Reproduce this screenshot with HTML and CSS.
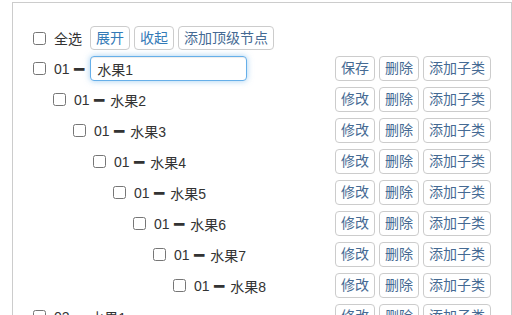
FILE: index.html
```html
<!DOCTYPE html>
<html lang="zh-CN">
<head>
    <meta charset="UTF-8">
    <meta name="viewport" content="width=device-width, initial-scale=1.0">
    <title>分类树</title>
    <link rel="stylesheet" href="styles.css">
</head>
<body>
    <div id="tree-panel">
        <div class="tree-row top-row">
            <label class="node-label"><input type="checkbox"> 全选</label>
            <div class="toolbar">
                <button class="btn btn-primary-text">展开</button>
                <button class="btn btn-primary-text">收起</button>
                <button class="btn">添加顶级节点</button>
            </div>
        </div>

        <div class="tree-row level-0">
            <div class="node-label">
                <input type="checkbox">
                <span class="code">01</span><span class="dash">━</span>
                <input type="text" class="name-input" value="水果1">
            </div>
            <div class="actions">
                <button class="btn">保存</button>
                <button class="btn">删除</button>
                <button class="btn">添加子类</button>
            </div>
        </div>

        <div class="tree-row level-1">
            <div class="node-label"><input type="checkbox"><span class="code">01</span><span class="dash">━</span><span class="name">水果2</span></div>
            <div class="actions"><button class="btn">修改</button><button class="btn">删除</button><button class="btn">添加子类</button></div>
        </div>
        <div class="tree-row level-2">
            <div class="node-label"><input type="checkbox"><span class="code">01</span><span class="dash">━</span><span class="name">水果3</span></div>
            <div class="actions"><button class="btn">修改</button><button class="btn">删除</button><button class="btn">添加子类</button></div>
        </div>
        <div class="tree-row level-3">
            <div class="node-label"><input type="checkbox"><span class="code">01</span><span class="dash">━</span><span class="name">水果4</span></div>
            <div class="actions"><button class="btn">修改</button><button class="btn">删除</button><button class="btn">添加子类</button></div>
        </div>
        <div class="tree-row level-4">
            <div class="node-label"><input type="checkbox"><span class="code">01</span><span class="dash">━</span><span class="name">水果5</span></div>
            <div class="actions"><button class="btn">修改</button><button class="btn">删除</button><button class="btn">添加子类</button></div>
        </div>
        <div class="tree-row level-5">
            <div class="node-label"><input type="checkbox"><span class="code">01</span><span class="dash">━</span><span class="name">水果6</span></div>
            <div class="actions"><button class="btn">修改</button><button class="btn">删除</button><button class="btn">添加子类</button></div>
        </div>
        <div class="tree-row level-6">
            <div class="node-label"><input type="checkbox"><span class="code">01</span><span class="dash">━</span><span class="name">水果7</span></div>
            <div class="actions"><button class="btn">修改</button><button class="btn">删除</button><button class="btn">添加子类</button></div>
        </div>
        <div class="tree-row level-7">
            <div class="node-label"><input type="checkbox"><span class="code">01</span><span class="dash">━</span><span class="name">水果8</span></div>
            <div class="actions"><button class="btn">修改</button><button class="btn">删除</button><button class="btn">添加子类</button></div>
        </div>

        <div class="tree-row level-0">
            <div class="node-label"><input type="checkbox"><span class="code">02</span><span class="dash">━</span><span class="name">水果1</span></div>
            <div class="actions"><button class="btn">修改</button><button class="btn">删除</button><button class="btn">添加子类</button></div>
        </div>
    </div>
</body>
</html>
```

FILE: styles.css
```css
* {
    margin: 0;
    padding: 0;
    box-sizing: border-box;
}

body {
    font-family: "Liberation Sans", "Noto Sans CJK SC", sans-serif;
    font-size: 14px;
    color: #333;
    background-color: #fff;
    overflow: hidden;
}

#tree-panel {
    margin: 2px 0 0 12px;
    width: 500px;
    border: 1px solid #ccc;
    border-bottom: none;
    padding: 23px 20px 0 16px;
}

.tree-row {
    display: flex;
    align-items: center;
    height: 25px;
    margin-bottom: 6px;
}

.tree-row.top-row {
    height: 24px;
}

.node-label {
    display: flex;
    align-items: center;
    white-space: nowrap;
}

.node-label input[type="checkbox"] {
    width: 13px;
    height: 13px;
    margin: 0 8px 0 4px;
}

.toolbar {
    display: flex;
    gap: 4px;
    margin-left: 8px;
}

.actions {
    display: flex;
    gap: 4px;
    margin-left: auto;
}

.btn {
    font-family: inherit;
    font-size: 14px;
    height: 25px;
    line-height: 23px;
    padding: 0 5px;
    background-color: #fff;
    color: #456a93;
    border: 1px solid #ccc;
    border-radius: 4px;
    cursor: pointer;
}

.top-row .btn {
    height: 24px;
    line-height: 22px;
}

.btn-primary-text {
    color: #337ab7;
}

.btn:hover {
    background-color: #e6e6e6;
}

.code {
    width: 15px;
}

.dash {
    font-family: "DejaVu Sans", sans-serif;
    font-size: 17px;
    line-height: 20px;
    margin: 0 6px 0 5px;
}

.name-input {
    font-family: inherit;
    font-size: 14px;
    color: #333;
    width: 157px;
    height: 25px;
    padding: 0 6px;
    border: 1px solid #66afe9;
    border-radius: 4px;
    outline: none;
    box-shadow: inset 0 1px 1px rgba(0, 0, 0, .075), 0 0 6px rgba(102, 175, 233, .6);
}

.level-1 .node-label { padding-left: 20px; }
.level-2 .node-label { padding-left: 40px; }
.level-3 .node-label { padding-left: 60px; }
.level-4 .node-label { padding-left: 80px; }
.level-5 .node-label { padding-left: 100px; }
.level-6 .node-label { padding-left: 120px; }
.level-7 .node-label { padding-left: 140px; }
```
